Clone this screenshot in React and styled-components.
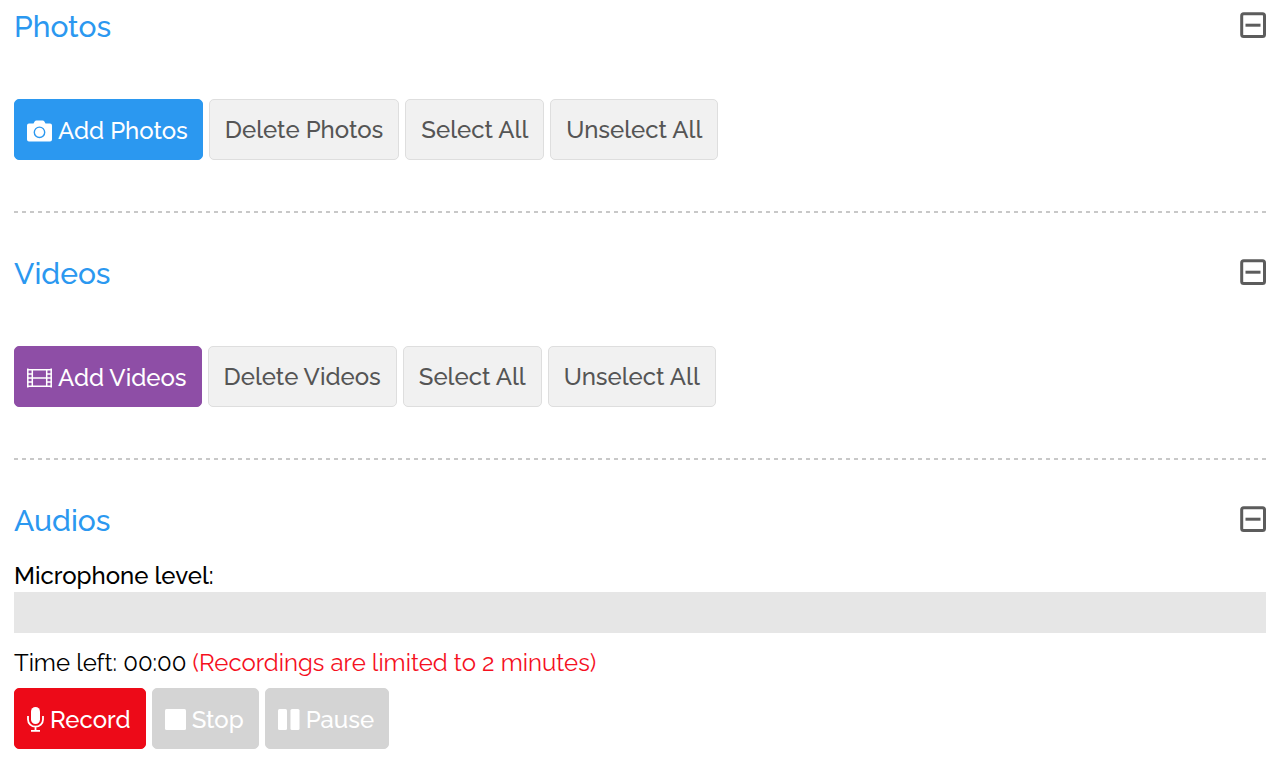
import React, { useState } from "react";
import styled, { createGlobalStyle } from "styled-components";

const GlobalStyle = createGlobalStyle`
  *, *::before, *::after { box-sizing: border-box; }
  body {
    margin: 0;
    background: #fff;
    color: #000;
    font-family: Raleway, Lato, "Open Sans", sans-serif;
    font-size: 24px;
    font-variant-numeric: oldstyle-nums;
  }
`;

const Page = styled.main`
  padding: 8px 14px 16px;
`;

const Section = styled.section`
  display: flex;
  flex-direction: column;
`;

const Header = styled.header`
  display: flex;
  align-items: center;
  justify-content: space-between;
  height: 36px;
`;

const Title = styled.h2`
  margin: 0;
  padding-top: 2px;
  font-size: 30px;
  line-height: 36px;
  font-weight: 500;
  color: #2b98f0;
`;

const Toggle = styled.button`
  display: flex;
  padding: 0;
  border: 0;
  background: none;
  color: #5c5c5c;
  cursor: pointer;
`;

const Toolbar = styled.div`
  display: flex;
  flex-wrap: wrap;
  gap: 6px;
  padding: ${(p) => (p.$spaced ? "55px 0 51px" : "0")};
`;

const tones = {
  blue: ["#2b98f0", "#fff", "#2b98f0"],
  purple: ["#8e4ea6", "#fff", "#8e4ea6"],
  red: ["#ed0a18", "#fff", "#ed0a18"],
  plain: ["#f1f1f1", "#555", "#dedede"],
  muted: ["#d4d4d4", "#fff", "#d4d4d4"],
};

const Button = styled.button`
  display: inline-flex;
  align-items: center;
  justify-content: center;
  gap: 6px;
  height: 61px;
  padding: ${(p) => (p.$tone === "plain" ? "0 15px" : "2px 14px 0 12px")};
  border: 1px solid ${(p) => tones[p.$tone][2]};
  border-radius: 5px;
  background: ${(p) => tones[p.$tone][0]};
  color: ${(p) => tones[p.$tone][1]};
  font: inherit;
  font-weight: 500;
  white-space: nowrap;
  cursor: pointer;

  &:disabled { cursor: default; }
`;

const Divider = styled.hr`
  width: 100%;
  height: 2px;
  margin: 0 0 42px;
  border: 0;
  background: repeating-linear-gradient(90deg, #c8c8c8 0 4px, transparent 4px 8px);
`;

const LevelLabel = styled.div`
  margin-top: 22px;
  line-height: 32px;
  font-weight: 500;
`;

const Level = styled.div`
  height: 41px;
  background: #e6e6e6;
`;

const LevelFill = styled.div`
  height: 100%;
  background: #4caf50;
`;

const TimeLeft = styled.p`
  margin: 14px 0 9px;
  line-height: 32px;
`;

const Limit = styled.span`
  color: #f5101e;
`;

const CameraIcon = () => (
  <svg width="25" height="22" viewBox="0 0 25 22" aria-hidden="true">
    <path fill="currentColor" fillRule="evenodd" d="M2 3.5H6.5L7.8 1.2Q8.3.4 9.3.4H15.7Q16.7.4 17.2 1.2L18.5 3.5H23Q25 3.5 25 5.5V19.5Q25 21.5 23 21.5H2Q0 21.5 0 19.5V5.5Q0 3.5 2 3.5ZM12.5 6.4A5.9 5.9 0 1 0 12.5 18.2A5.9 5.9 0 1 0 12.5 6.4ZM12.5 7.8A4.5 4.5 0 1 1 12.5 16.8A4.5 4.5 0 1 1 12.5 7.8Z" />
  </svg>
);

const FilmIcon = () => (
  <svg width="25" height="20" viewBox="0 0 25 20" fill="none" stroke="currentColor" strokeWidth="1.5" aria-hidden="true">
    <path d="M.8 .5V19.5M24.2 .5V19.5M5.3 1V19M19.7 1V19" />
    <path d="M0 1.8H25M0 18.2H25M5 10H20M0 6H5M0 10H5M0 14H5M20 6H25M20 10H25M20 14H25" />
  </svg>
);

const MicIcon = () => (
  <svg width="17" height="25" viewBox="0 0 17 25" aria-hidden="true">
    <rect x="4" y="0" width="9" height="17" rx="4.5" fill="currentColor" />
    <path d="M1 9V12.5A7.5 7.2 0 0 0 16 12.5V9M8.5 20V24M4 23.8H13" fill="none" stroke="currentColor" strokeWidth="1.8" />
  </svg>
);

const StopIcon = () => (
  <svg width="21" height="21" viewBox="0 0 21 21" aria-hidden="true">
    <rect width="21" height="21" rx="1.5" fill="currentColor" />
  </svg>
);

const PauseIcon = () => (
  <svg width="22" height="21" viewBox="0 0 22 21" fill="currentColor" aria-hidden="true">
    <rect width="9" height="21" rx="1.5" />
    <rect x="12.5" width="9" height="21" rx="1.5" />
  </svg>
);

const MinusSquare = ({ open }) => (
  <svg width="26" height="28" viewBox="0 0 26 28" fill="none" stroke="currentColor" strokeWidth="3" aria-hidden="true">
    <rect x="1.7" y="1.7" width="22.8" height="22.8" rx="2" />
    <path d={open ? "M5.5 13.2H20.5" : "M5.5 13.2H20.5M13 6V20"} />
  </svg>
);

function Panel({ title, children }) {
  const [open, setOpen] = useState(true);
  return (
    <Section>
      <Header>
        <Title>{title}</Title>
        <Toggle
          type="button"
          aria-label={`Toggle ${title}`}
          aria-expanded={open}
          onClick={() => setOpen(!open)}
        >
          <MinusSquare open={open} />
        </Toggle>
      </Header>
      {open && children}
    </Section>
  );
}

function MediaPanel({ name, tone, icon }) {
  return (
    <>
      <Panel title={name}>
        <Toolbar $spaced>
          <Button type="button" $tone={tone}>{icon}Add {name}</Button>
          <Button type="button" $tone="plain">Delete {name}</Button>
          <Button type="button" $tone="plain">Select All</Button>
          <Button type="button" $tone="plain">Unselect All</Button>
        </Toolbar>
      </Panel>
      <Divider />
    </>
  );
}

export default function App() {
  const level = 0;
  return (
    <>
      <GlobalStyle />
      <Page>
        <MediaPanel name="Photos" tone="blue" icon={<CameraIcon />} />
        <MediaPanel name="Videos" tone="purple" icon={<FilmIcon />} />
        <Panel title="Audios">
          <LevelLabel id="mic-label">Microphone level:</LevelLabel>
          <Level
            role="meter"
            aria-labelledby="mic-label"
            aria-valuemin={0}
            aria-valuemax={100}
            aria-valuenow={level}
          >
            <LevelFill style={{ width: `${level}%` }} />
          </Level>
          <TimeLeft>
            Time left: 00:00 <Limit>(Recordings are limited to 2 minutes)</Limit>
          </TimeLeft>
          <Toolbar>
            <Button type="button" $tone="red"><MicIcon />Record</Button>
            <Button type="button" $tone="muted" disabled><StopIcon />Stop</Button>
            <Button type="button" $tone="muted" disabled><PauseIcon />Pause</Button>
          </Toolbar>
        </Panel>
      </Page>
    </>
  );
}
